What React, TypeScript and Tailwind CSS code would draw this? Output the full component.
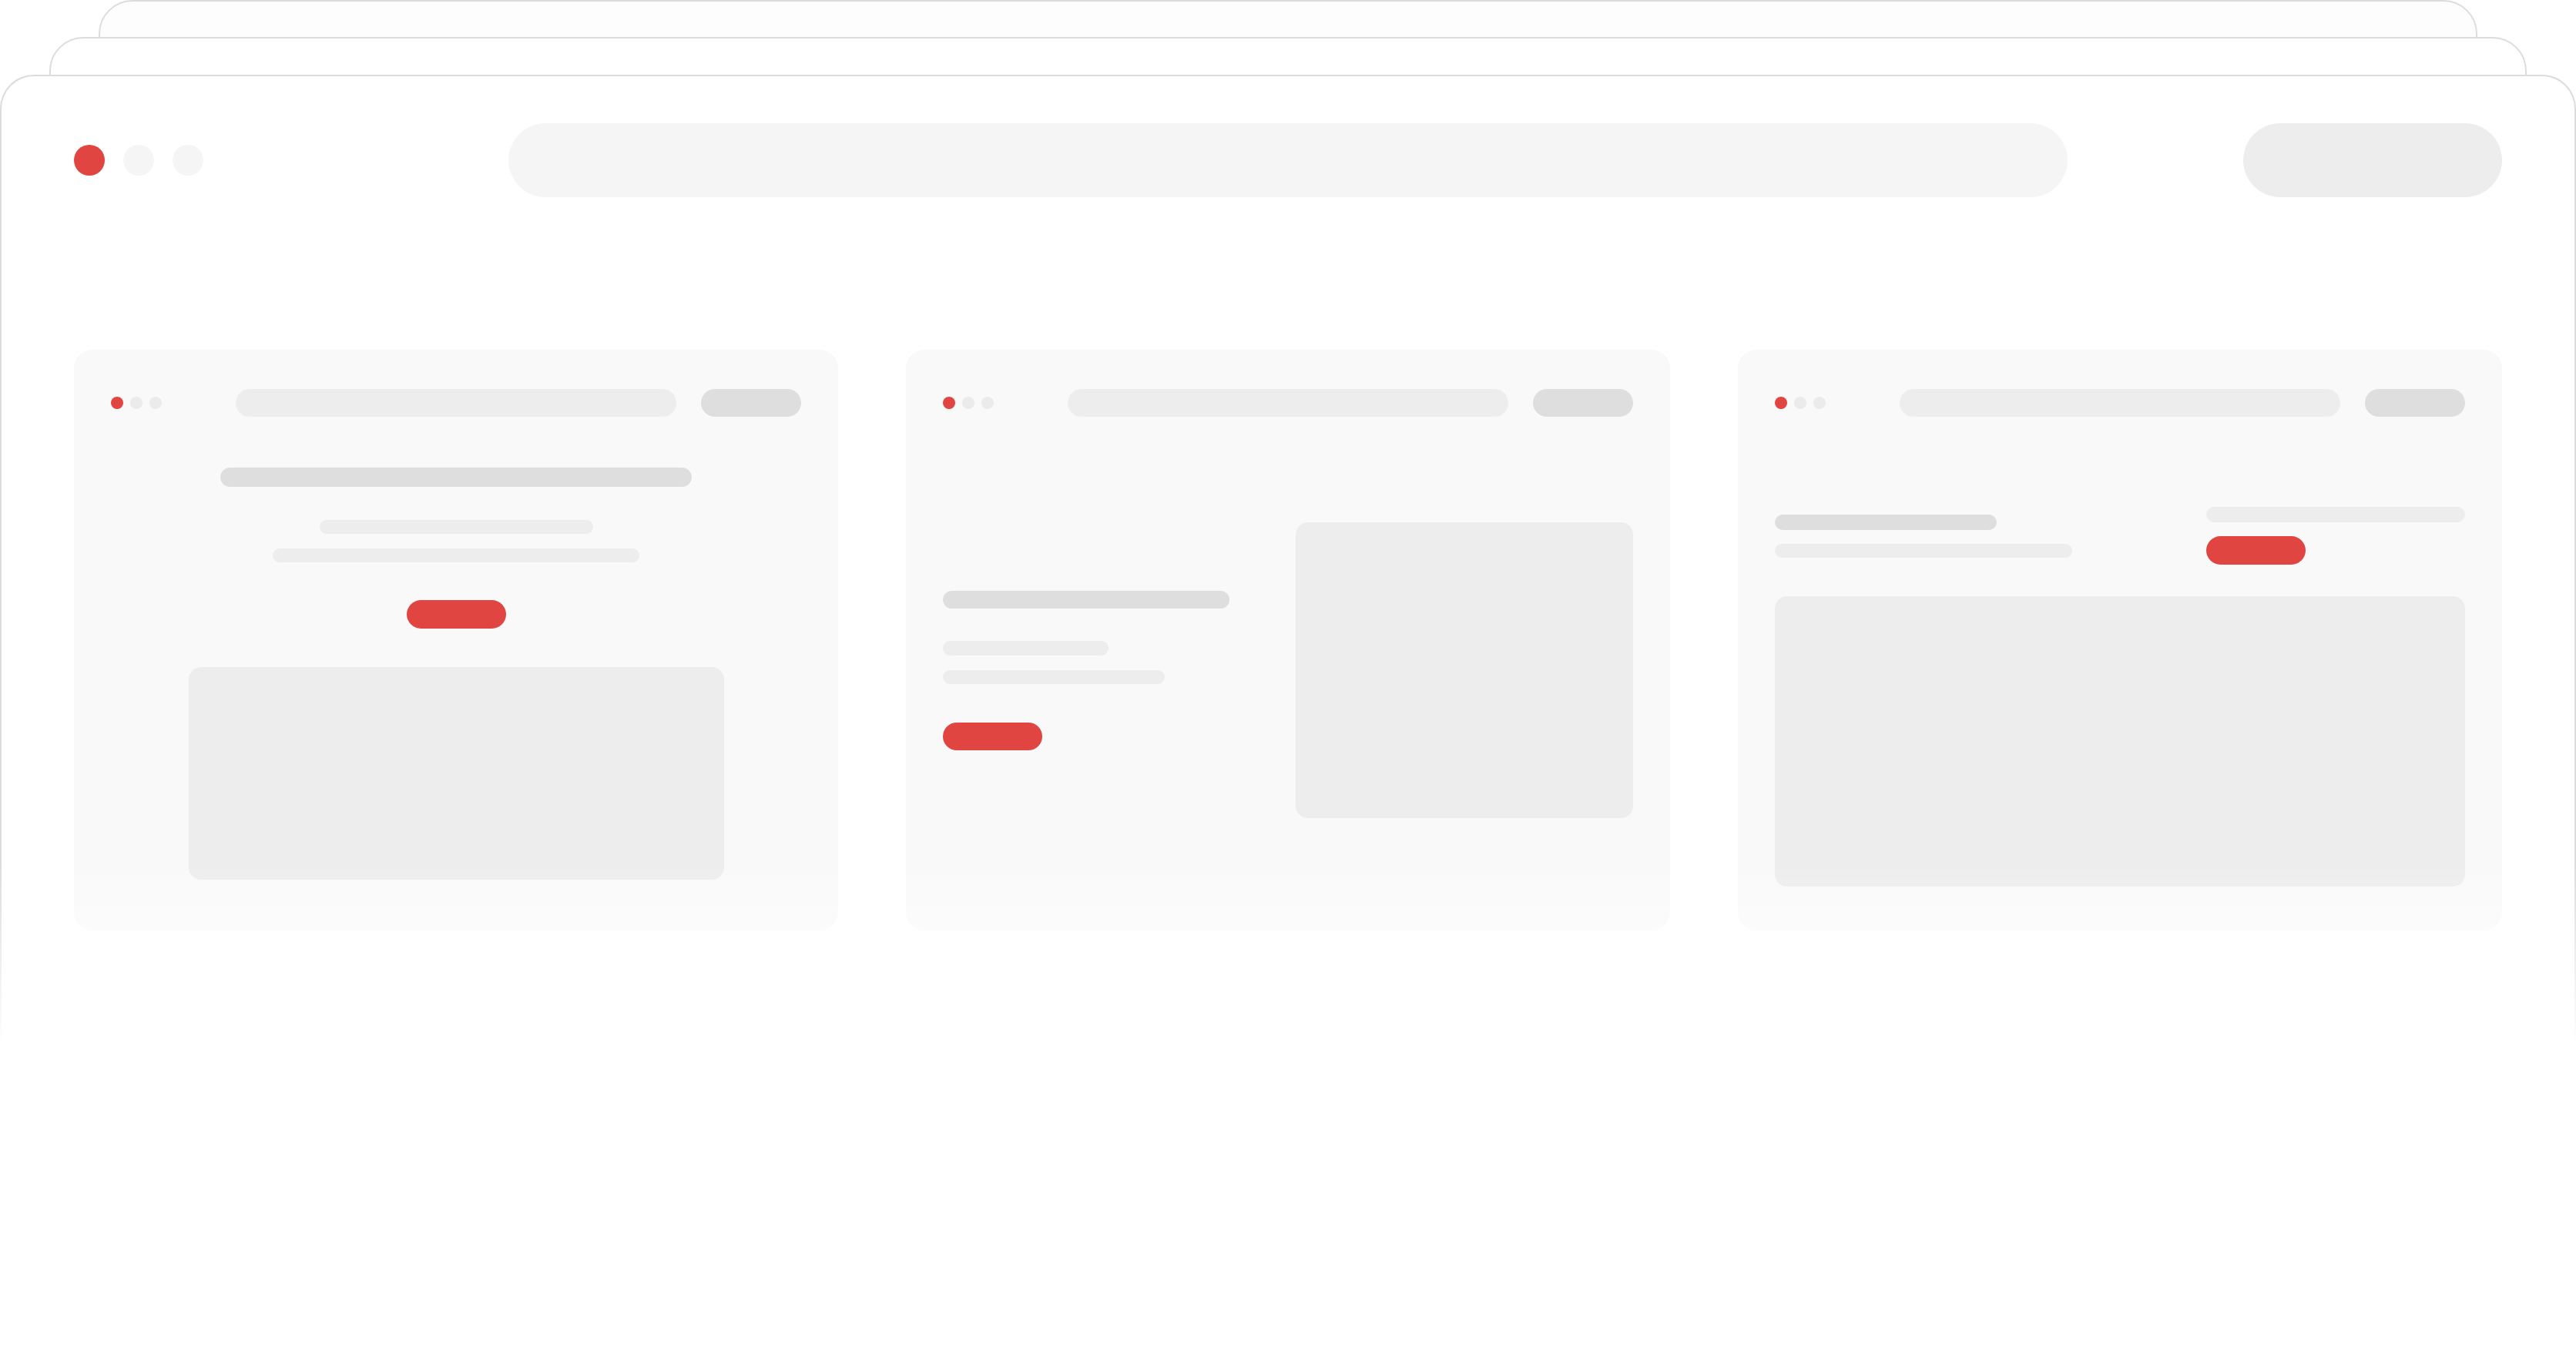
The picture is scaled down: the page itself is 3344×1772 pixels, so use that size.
import React from "react";

function Dots({ size, gap, gray }: { size: string; gap: string; gray: string }) {
  return (
    <div className={`flex items-center ${gap}`}>
      <div className={`${size} rounded-full bg-[#e04541]`} />
      <div className={`${size} rounded-full ${gray}`} />
      <div className={`${size} rounded-full ${gray}`} />
    </div>
  );
}

function CardHeader() {
  return (
    <div className="flex h-[36px] items-center">
      <Dots size="w-[16px] h-[16px]" gap="gap-[9px]" gray="bg-[#ebebeb]" />
      <div className="ml-[96px] h-[36px] flex-1 rounded-full bg-[#ededed]" />
      <div className="ml-[32px] h-[36px] w-[130px] rounded-full bg-[#dedede]" />
    </div>
  );
}

function Card({ children }: { children: React.ReactNode }) {
  return (
    <div className="flex h-[754px] w-[992px] flex-col rounded-[24px] bg-[#f9f9f9] px-[48px] pt-[51px]">
      <CardHeader />
      {children}
    </div>
  );
}

export default function App() {
  return (
    <div className="relative h-[1772px] w-[3344px] overflow-hidden bg-white">
      {/* stacked back windows */}
      <div className="absolute left-[128px] top-0 h-[400px] w-[3088px] rounded-t-[44px] border-2 border-[#dcdcdc] bg-[#fdfdfd]" />
      <div className="absolute left-[64px] top-[48px] h-[400px] w-[3216px] rounded-t-[44px] border-2 border-[#dcdcdc] bg-white" />

      {/* main window */}
      <div className="absolute left-0 top-[97px] flex h-[1675px] w-[3344px] flex-col rounded-t-[44px] border-2 border-b-0 border-[#dcdcdc] bg-white">
        <div className="flex h-[96px] items-center px-[94px] mt-[61px]">
          <Dots size="w-[40px] h-[40px]" gap="gap-[24px]" gray="bg-[#f5f5f5]" />
          <div className="ml-[396px] mr-[228px] h-[96px] flex-1 rounded-full bg-[#f5f5f5]" />
          <div className="h-[96px] w-[336px] rounded-full bg-[#ededed]" />
        </div>

        <div className="mt-[198px] flex gap-[88px] px-[94px]">
          {/* card 1: centered hero */}
          <Card>
            <div className="flex flex-col items-center">
              <div className="mt-[66px] h-[25px] w-[612px] rounded-full bg-[#dedede]" />
              <div className="mt-[43px] h-[18px] w-[355px] rounded-full bg-[#ededed]" />
              <div className="mt-[19px] h-[18px] w-[476px] rounded-full bg-[#ededed]" />
              <div className="mt-[49px] h-[37px] w-[129px] rounded-full bg-[#e04541]" />
              <div className="mt-[50px] h-[276px] w-[695px] rounded-[16px] bg-[#ededed]" />
            </div>
          </Card>

          {/* card 2: split */}
          <Card>
            <div className="mt-[137px] flex items-center justify-between">
              <div className="flex flex-col">
                <div className="h-[23px] w-[372px] rounded-full bg-[#dedede]" />
                <div className="mt-[42px] h-[19px] w-[215px] rounded-full bg-[#ededed]" />
                <div className="mt-[19px] h-[18px] w-[288px] rounded-full bg-[#ededed]" />
                <div className="mt-[50px] h-[36px] w-[129px] rounded-full bg-[#e04541]" />
              </div>
              <div className="h-[384px] w-[438px] rounded-[16px] bg-[#ededed]" />
            </div>
          </Card>

          {/* card 3: header row + big image */}
          <Card>
            <div className="mt-[117px] flex items-center justify-between">
              <div className="flex flex-col">
                <div className="h-[20px] w-[288px] rounded-full bg-[#dedede]" />
                <div className="mt-[18px] h-[18px] w-[386px] rounded-full bg-[#ededed]" />
              </div>
              <div className="flex w-[336px] flex-col">
                <div className="h-[20px] w-[336px] rounded-full bg-[#ededed]" />
                <div className="mt-[18px] h-[37px] w-[129px] rounded-full bg-[#e04541]" />
              </div>
            </div>
            <div className="mt-[41px] h-[377px] w-full rounded-[16px] bg-[#ededed]" />
          </Card>
        </div>
      </div>

      {/* bottom fade */}
      <div className="absolute bottom-0 left-0 right-0 top-[1120px] flex flex-col">
        <div className="h-[240px] bg-gradient-to-b from-white/0 to-white" />
        <div className="flex-1 bg-white" />
      </div>
    </div>
  );
}
